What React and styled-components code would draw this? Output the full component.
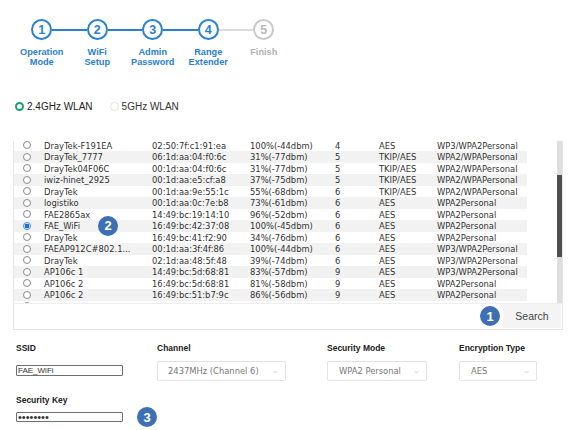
import React from 'react';
import styled, { createGlobalStyle } from 'styled-components';

const GlobalStyle = createGlobalStyle`
  html, body {
    margin: 0;
    padding: 0;
    background: #ffffff;
  }
  body {
    width: 576px;
    height: 430px;
    overflow: hidden;
    font-family: 'Liberation Sans', Arial, sans-serif;
  }
`;

const BLUE = '#2a80d3';
const GREY = '#c9c9c9';
const BADGE = '#3c6fb4';
const TABLE_FONT = "'DejaVu Sans Condensed', 'Liberation Sans', sans-serif";

const Page = styled.div`
  display: flex;
  flex-direction: column;
  width: 576px;
`;

/* ---------- stepper ---------- */

const Stepper = styled.div`
  display: flex;
  padding: 19px 0 0 14px;
`;

const Step = styled.div`
  display: flex;
  flex-direction: column;
  align-items: center;
  width: 55.5px;
`;

const CircleRow = styled.div`
  display: flex;
  align-items: center;
  width: 100%;
  height: 21px;
`;

const Line = styled.div`
  flex: 1;
  height: 2px;
  background: ${(p) => p.color || 'transparent'};
`;

const Circle = styled.div`
  display: flex;
  align-items: center;
  justify-content: center;
  box-sizing: border-box;
  width: 21px;
  height: 21px;
  border-radius: 50%;
  border: 2px solid ${(p) => (p.done ? BLUE : GREY)};
  color: ${(p) => (p.done ? BLUE : '#b8b8b8')};
  font-size: 12.5px;
  font-weight: 700;
  background: #fff;
`;

const StepLabel = styled.div`
  margin-top: 6.5px;
  text-align: center;
  font-size: 9.2px;
  font-weight: 700;
  line-height: 10.5px;
  color: ${(p) => (p.done ? BLUE : '#b4b4b4')};
  white-space: nowrap;
`;

/* ---------- band radio ---------- */

const BandRow = styled.div`
  display: flex;
  align-items: center;
  gap: 17px;
  height: 14px;
  margin-top: 32px;
  padding-left: 15px;
`;

const Band = styled.label`
  display: flex;
  align-items: center;
  gap: 3px;
  font-size: 10px;
  color: ${(p) => (p.active ? '#222' : '#333')};
`;

const BandDot = styled.span`
  box-sizing: border-box;
  width: 9px;
  height: 9px;
  border-radius: 50%;
  border: ${(p) => (p.active ? '2.5px solid #16a07c' : '1px solid #e2e2e2')};
  background: #fff;
`;

/* ---------- scan list ---------- */

const Panel = styled.div`
  display: flex;
  flex-direction: column;
  margin: 27.8px 13px 0;
  border: 1px solid #e6e6e6;
  border-top: none;
`;

const ListArea = styled.div`
  display: flex;
  height: 161.5px;
  border-bottom: 1px solid #eeeeee;
`;

const TableClip = styled.div`
  flex: 1;
  overflow: hidden;
`;

const Rows = styled.div`
  display: flex;
  flex-direction: column;
  width: 513px;
  margin-top: -1.75px;
`;

const Row = styled.div`
  display: grid;
  grid-template-columns: 30px 108px 98px 85px 44px 58px 90px;
  align-items: center;
  height: 11.5px;
  line-height: 11.5px;
  background: ${(p) => (p.striped ? '#f2f2f2' : '#ffffff')};
  font-family: ${TABLE_FONT};
  font-size: 9.3px;
  color: #333;
  white-space: nowrap;
`;

const Cell = styled.div`
  position: relative;
  overflow: visible;
`;

const RadioCell = styled.div`
  display: flex;
  align-items: center;
  padding-left: 9px;
`;

const RowRadio = styled.span`
  box-sizing: border-box;
  width: 8px;
  height: 8px;
  border-radius: 50%;
  border: 1px solid ${(p) => (p.checked ? '#4a8ae0' : '#8a8a8a')};
  background: ${(p) => (p.checked ? 'radial-gradient(circle, #1f6fd8 0 2.3px, #ffffff 2.6px)' : '#fff')};
`;

const Badge = styled.span`
  display: inline-flex;
  align-items: center;
  justify-content: center;
  width: 20px;
  height: 20px;
  border-radius: 50%;
  background: ${BADGE};
  color: #fff;
  font-family: 'Liberation Sans', Arial, sans-serif;
  font-size: 13px;
  font-weight: 700;
  line-height: 1;
`;

const RowBadge = styled(Badge)`
  position: absolute;
  left: 54px;
  top: -4.5px;
`;

const Track = styled.div`
  display: flex;
  flex-direction: column;
  width: 5px;
  background: #dedede;
`;

const Thumb = styled.div`
  margin-top: 33.5px;
  height: 82px;
  background: #4f4f4f;
`;

const Footer = styled.div`
  display: flex;
  justify-content: flex-end;
  align-items: center;
  gap: 3px;
  height: 25px;
  padding-right: 1px;
`;

const SearchButton = styled.button`
  width: 58px;
  height: 24px;
  border: none;
  background: #f4f4f4;
  color: #444;
  font-family: 'Liberation Sans', Arial, sans-serif;
  font-size: 10.5px;
  padding: 0;
`;

/* ---------- form ---------- */

const Form = styled.div`
  display: grid;
  grid-template-columns: 141px 170px 132px 100px;
  row-gap: 14.5px;
  margin-top: 13px;
  padding-left: 16px;
`;

const Field = styled.div`
  display: flex;
  flex-direction: column;
  gap: ${(p) => p.gap}px;
`;

const FieldLabel = styled.div`
  font-size: 8.5px;
  font-weight: 700;
  line-height: 10px;
  color: #222;
`;

const Control = styled.div`
  display: flex;
  align-items: center;
  gap: 14px;
  height: ${(p) => p.h}px;
`;

const TextInput = styled.input`
  box-sizing: border-box;
  width: 107px;
  height: ${(p) => p.h || 11}px;
  margin: 0;
  padding: 0 1px;
  border: 1px solid #6f6f6f;
  border-radius: 1px;
  font-family: 'Liberation Sans', Arial, sans-serif;
  font-size: ${(p) => p.fs || 8}px;
  line-height: 1;
  color: #333;
  outline: none;
`;

const Select = styled.div`
  display: flex;
  align-items: center;
  justify-content: space-between;
  box-sizing: border-box;
  width: ${(p) => p.w}px;
  height: 20px;
  padding: 0 7px 0 ${(p) => p.pl}px;
  border: 1px solid #e3e3e3;
  border-radius: 2px;
  font-family: ${TABLE_FONT};
  font-size: 9.3px;
  color: #777;
  white-space: nowrap;
`;

const Chevron = () => (
  <svg width="5" height="4" viewBox="0 0 5 4" style={{ marginTop: 3 }}>
    <path d="M0.5 1 L2.5 3 L4.5 1" fill="none" stroke="#c4c4c4" strokeWidth="0.8" />
  </svg>
);

const steps = [
  ['Operation', 'Mode'],
  ['WiFi', 'Setup'],
  ['Admin', 'Password'],
  ['Range', 'Extender'],
  ['Finish'],
];

const networks = [
  ['DrayTek-F191EA', '02:50:7f:c1:91:ea', '100%(-44dbm)', '4', 'AES', 'WP3/WPA2Personal'],
  ['DrayTek_7777', '06:1d:aa:04:f0:6c', '31%(-77dbm)', '5', 'TKIP/AES', 'WPA2/WPAPersonal'],
  ['DrayTek04F06C', '00:1d:aa:04:f0:6c', '31%(-77dbm)', '5', 'TKIP/AES', 'WPA2/WPAPersonal'],
  ['iwiz-hinet_2925', '00:1d:aa:e5:cf:a8', '37%(-75dbm)', '5', 'TKIP/AES', 'WPA2/WPAPersonal'],
  ['DrayTek', '00:1d:aa:9e:55:1c', '55%(-68dbm)', '6', 'TKIP/AES', 'WPA2/WPAPersonal'],
  ['logistiko', '00:1d:aa:0c:7e:b8', '73%(-61dbm)', '6', 'AES', 'WPA2Personal'],
  ['FAE2865ax', '14:49:bc:19:14:10', '96%(-52dbm)', '6', 'AES', 'WPA2Personal'],
  ['FAE_WiFi', '16:49:bc:42:37:08', '100%(-45dbm)', '6', 'AES', 'WPA2Personal'],
  ['DrayTek', '16:49:bc:41:f2:90', '34%(-76dbm)', '6', 'AES', 'WPA2Personal'],
  ['FAEAP912C#802.1...', '00:1d:aa:3f:4f:86', '100%(-44dbm)', '6', 'AES', 'WP3/WPA2Personal'],
  ['DrayTek', '02:1d:aa:48:5f:48', '39%(-74dbm)', '6', 'AES', 'WP3/WPA2Personal'],
  ['AP106c 1', '14:49:bc:5d:68:81', '83%(-57dbm)', '9', 'AES', 'WP3/WPA2Personal'],
  ['AP106c 2', '16:49:bc:5d:68:81', '81%(-58dbm)', '9', 'AES', 'WPA2Personal'],
  ['AP106c 2', '16:49:bc:51:b7:9c', '86%(-56dbm)', '9', 'AES', 'WPA2Personal'],
  ['DrayTek_5G', '16:49:bc:51:b7:9d', '62%(-66dbm)', '11', 'AES', 'WPA2Personal'],
];

const SELECTED = 7;

export default function App() {
  return (
    <Page>
      <GlobalStyle />
      <Stepper>
        {steps.map((label, i) => {
          const done = i < 4;
          const left = i === 0 ? null : i < 4 ? BLUE : '#dcdcdc';
          const right = i === 4 ? null : i < 3 ? BLUE : '#dcdcdc';
          return (
            <Step key={i}>
              <CircleRow>
                <Line color={left} />
                <Circle done={done}>{i + 1}</Circle>
                <Line color={right} />
              </CircleRow>
              <StepLabel done={done}>
                {label.map((l) => (
                  <div key={l}>{l}</div>
                ))}
              </StepLabel>
            </Step>
          );
        })}
      </Stepper>

      <BandRow>
        <Band active>
          <BandDot active />
          2.4GHz WLAN
        </Band>
        <Band>
          <BandDot />
          5GHz WLAN
        </Band>
      </BandRow>

      <Panel>
        <ListArea>
          <TableClip>
            <Rows>
              {networks.map((n, i) => (
                <Row key={i} striped={i % 2 === 1}>
                  <RadioCell>
                    <RowRadio checked={i === SELECTED} />
                  </RadioCell>
                  <Cell>
                    {n[0]}
                    {i === SELECTED && <RowBadge>2</RowBadge>}
                  </Cell>
                  <Cell>{n[1]}</Cell>
                  <Cell>{n[2]}</Cell>
                  <Cell>{n[3]}</Cell>
                  <Cell>{n[4]}</Cell>
                  <Cell>{n[5]}</Cell>
                </Row>
              ))}
            </Rows>
          </TableClip>
          <Track>
            <Thumb />
          </Track>
        </ListArea>
        <Footer>
          <Badge>1</Badge>
          <SearchButton>Search</SearchButton>
        </Footer>
      </Panel>

      <Form>
        <Field gap={8}>
          <FieldLabel>SSID</FieldLabel>
          <Control h={20}>
            <TextInput h={11} defaultValue="FAE_WiFi" readOnly />
          </Control>
        </Field>
        <Field gap={8}>
          <FieldLabel>Channel</FieldLabel>
          <Control h={20}>
            <Select w={129} pl={10}>
              2437MHz (Channel 6)
              <Chevron />
            </Select>
          </Control>
        </Field>
        <Field gap={8}>
          <FieldLabel>Security Mode</FieldLabel>
          <Control h={20}>
            <Select w={100} pl={11}>
              WPA2 Personal
              <Chevron />
            </Select>
          </Control>
        </Field>
        <Field gap={8}>
          <FieldLabel>Encryption Type</FieldLabel>
          <Control h={20}>
            <Select w={78} pl={11}>
              AES
              <Chevron />
            </Select>
          </Control>
        </Field>
        <Field gap={2}>
          <FieldLabel>Security Key</FieldLabel>
          <Control h={20}>
            <TextInput h={10} fs={11} type="password" defaultValue="12345678" readOnly />
            <Badge>3</Badge>
          </Control>
        </Field>
      </Form>
    </Page>
  );
}
